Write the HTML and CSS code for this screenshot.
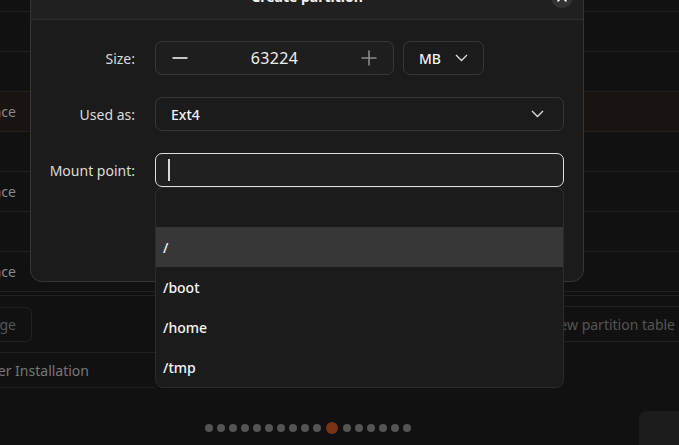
FILE: index.html
```html
<!DOCTYPE html>
<html lang="en">
<head>
    <meta charset="UTF-8">
    <meta name="viewport" content="width=device-width, initial-scale=1.0">
    <title>Create partition</title>
    <link rel="stylesheet" href="styles.css">
</head>
<body>
    <div class="page">
        <div class="disk-list">
            <div class="disk-row"></div>
            <div class="disk-row"></div>
            <div class="disk-row is-selected"><span class="clip"><span>Free space</span></span></div>
            <div class="disk-row"></div>
            <div class="disk-row"><span class="clip"><span>Free space</span></span></div>
            <div class="disk-row"></div>
            <div class="disk-row"><span class="clip"><span>Free space</span></span></div>
        </div>

        <div class="actions">
            <div class="actions__left">
                <div class="btn-clip"><button class="ghost-button">Change</button></div>
                <div class="text-row"><span class="clip clip--wide"><span>Bootloader Installation</span></span></div>
            </div>
            <div class="actions__right">
                <div class="text-row text-row--right"><span>New partition table</span></div>
            </div>
        </div>

        <div class="footer">
            <div class="dots">
                <span class="dot"></span><span class="dot"></span><span class="dot"></span><span class="dot"></span>
                <span class="dot"></span><span class="dot"></span><span class="dot"></span><span class="dot"></span>
                <span class="dot"></span><span class="dot"></span><span class="dot is-current"></span><span class="dot"></span>
                <span class="dot"></span><span class="dot"></span><span class="dot"></span><span class="dot"></span>
                <span class="dot"></span>
            </div>
            <div class="next-button"></div>
        </div>
    </div>

    <div class="dialog">
        <div class="dialog__header">
            <span></span>
            <span class="dialog__title">Create partition</span>
            <button class="dialog__close">
                <svg width="22" height="22" viewBox="0 0 22 22"><path d="M7 7l8 8M15 7l-8 8" stroke="#fff" stroke-width="1.6" stroke-linecap="round"/></svg>
            </button>
        </div>
        <div class="dialog__body">
            <label class="field-label">Size:</label>
            <div class="size-row">
                <div class="spin">
                    <svg class="spin__icon" width="16" height="16" viewBox="0 0 16 16"><path d="M0.5 8h15" stroke="#f0f0f0" stroke-width="1.6"/></svg>
                    <span class="spin__value">63224</span>
                    <svg class="spin__icon" width="16" height="16" viewBox="0 0 16 16"><path d="M0.5 8h15M8 0.5v15" stroke="#8a8a8a" stroke-width="1.6"/></svg>
                </div>
                <div class="unit">
                    <span>MB</span>
                    <svg width="13" height="8" viewBox="0 0 13 8"><path d="M1 1l5.5 5.5L12 1" fill="none" stroke="#e0e0e0" stroke-width="1.3"/></svg>
                </div>
            </div>

            <label class="field-label">Used as:</label>
            <div class="combo">
                <span>Ext4</span>
                <svg width="13" height="8" viewBox="0 0 13 8"><path d="M1 1l5.5 5.5L12 1" fill="none" stroke="#e0e0e0" stroke-width="1.3"/></svg>
            </div>

            <label class="field-label">Mount point:</label>
            <div class="mount">
                <div class="entry"><span class="entry__cursor"></span></div>
                <ul class="popup">
                    <li class="popup__item"></li>
                    <li class="popup__item is-hovered">/</li>
                    <li class="popup__item">/boot</li>
                    <li class="popup__item">/home</li>
                    <li class="popup__item">/tmp</li>
                </ul>
            </div>
        </div>
    </div>
</body>
</html>
```

FILE: styles.css
```css
html, body { margin: 0; height: 100%; }
body { background: #111111; color: #e8e8e8; font-family: "Noto Sans", "DejaVu Sans", sans-serif; font-size: 14px; overflow: hidden; position: relative; }
button { font: inherit; color: inherit; }

/* background installer page */
.page { width: 679px; }
.disk-list { margin-top: 11px; border-top: 1px solid #222; padding-bottom: 3px; border-bottom: 1px solid #222; }
.disk-row { height: 39px; border-bottom: 1px solid #222; display: flex; align-items: center; }
.disk-row.is-selected { background: #191311; }
.clip { width: 16px; display: flex; justify-content: flex-end; white-space: nowrap; color: #8a8a8a; }
.clip--wide { width: 89px; color: #777; }

.actions { display: flex; }
.actions__left { width: 155px; flex: none; }
.actions__right { flex: 1; min-width: 0; padding-left: 409px; }
.btn-clip { display: flex; justify-content: flex-end; margin-top: 11px; padding-bottom: 10px; border-bottom: 1px solid #222; width: 155px; }
.ghost-button { flex: none; height: 35px; padding: 0 15px; background: transparent; border: 1px solid #222; border-radius: 6px; color: #555; margin-right: 123px; }
.text-row { height: 34px; display: flex; align-items: center; border-bottom: 1px solid #222; }
.text-row--right { margin-top: 10px; border-top: 1px solid #222; color: #555; justify-content: flex-end; padding-right: 4px; white-space: nowrap; }
.text-row--right span { flex: none; }

.footer { position: relative; height: 80px; margin-top: 23px; }
.dots { display: flex; align-items: center; gap: 4px; padding-left: 205px; padding-top: 11px; }
.dot { width: 8px; height: 8px; border-radius: 50%; background: #545454; }
.dot.is-current { width: 12px; height: 12px; background: #7b3318; margin: 0 1px; }
.next-button { position: absolute; left: 639px; top: 0; width: 60px; height: 40px; border-radius: 8px; background: #1c1c1c; }

/* dialog */
.dialog { position: absolute; left: 30px; top: -27px; width: 552px; background: #1b1b1b; border: 1px solid #353535; border-radius: 12px; }
.dialog__header { height: 45px; background: #202020; border-bottom: 1px solid #2e2e2e; border-radius: 12px 12px 0 0; display: grid; grid-template-columns: 1fr auto 1fr; align-items: center; }
.dialog__title { font-weight: bold; color: #f2f2f2; }
.dialog__close { justify-self: end; margin-right: 10px; width: 22px; height: 22px; padding: 0; border: 0; border-radius: 50%; background: #333; display: flex; }

.dialog__body { display: grid; grid-template-columns: 85px 1fr; column-gap: 20px; row-gap: 22px; padding: 21px 19px 94px; grid-auto-rows: 34px; }
.field-label { display: flex; align-items: center; justify-content: flex-end; color: #dcdcdc; white-space: nowrap; }

.size-row { display: flex; gap: 9px; }
.spin { width: 239px; box-sizing: border-box; border: 1px solid #383838; border-radius: 7px; background: #1e1e1e; display: flex; align-items: center; justify-content: space-between; padding: 0 16px; }
.spin__value { font-size: 16px; color: #f0f0f0; letter-spacing: 0.3px; }
.unit { width: 81px; box-sizing: border-box; border: 1px solid #383838; border-radius: 7px; display: flex; align-items: center; padding-left: 15px; gap: 14px; font-weight: 500; color: #f2f2f2; }

.combo { box-sizing: border-box; border: 1px solid #383838; border-radius: 7px; display: flex; align-items: center; justify-content: space-between; padding: 0 19px 0 15px; color: #f4f4f4; font-weight: 500; }

.mount { position: relative; }
.entry { height: 34px; box-sizing: border-box; border: 1px solid #dedede; border-radius: 7px; background: #202020; display: flex; align-items: center; padding-left: 12px; }
.entry__cursor { width: 2px; height: 22px; background: #d8d8d8; }

.popup { position: absolute; left: 0; right: 0; top: 34px; margin: 0; padding: 0; list-style: none; background: #1b1b1b; border: 1px solid #2c2c2c; border-radius: 8px; z-index: 2; }
.popup__item { height: 40px; display: flex; align-items: center; padding-left: 7px; color: #f4f4f4; font-weight: 500; font-size: 14px; }
.popup__item:first-child { height: 39px; }
.popup__item.is-hovered { background: #373737; }
```
